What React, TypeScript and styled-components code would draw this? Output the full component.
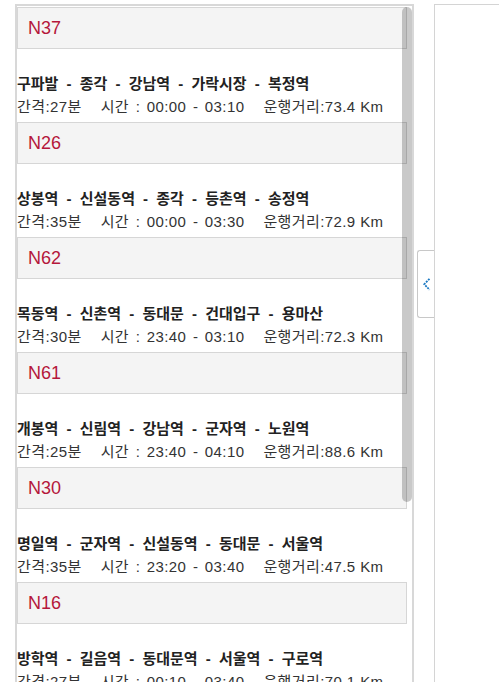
import React from "react";
import styled, { createGlobalStyle } from "styled-components";

const GlobalStyle = createGlobalStyle`
  html, body {
    margin: 0;
    padding: 0;
    overflow: hidden;
    background: #ffffff;
  }
  body {
    font-family: "Liberation Sans", "Noto Sans CJK KR", sans-serif;
  }
`;

const Page = styled.div`
  display: flex;
  align-items: flex-start;
  padding: 4px 0 0 15px;
  gap: 20px;
  height: 720px;
  box-sizing: border-box;
`;

const ListPanel = styled.div`
  position: relative;
  width: 399px;
  height: 716px;
  box-sizing: border-box;
  border: 2px solid #d8d8d8;
  overflow: hidden;
  flex-shrink: 0;
`;

const List = styled.div`
  display: flex;
  flex-direction: column;
`;

const Item = styled.div`
  display: flex;
  flex-direction: column;
`;

const Header = styled.div<{ $first?: boolean }>`
  height: 42px;
  box-sizing: border-box;
  margin: ${(p) => (p.$first ? "1px" : "0")} 5px 0 0;
  padding-left: 10px;
  display: flex;
  align-items: center;
  background: #f4f4f4;
  border: 1px solid #d6d6d6;
  font-family: "Liberation Sans", Arial, sans-serif;
  font-size: 18px;
  color: #b5173b;
`;

const Route = styled.div`
  margin-top: 26px;
  line-height: 18px;
  font-size: 15px;
  font-weight: bold;
  color: #222222;
  word-spacing: 4px;
  white-space: nowrap;
`;

const Info = styled.div`
  margin: 5px 0 6px;
  line-height: 18px;
  font-size: 15px;
  letter-spacing: 0.4px;
  color: #333333;
  white-space: nowrap;
  display: flex;
`;

const InfoPart = styled.span<{ $gap?: number; $spacing?: number }>`
  margin-left: ${(p) => p.$gap ?? 0}px;
  word-spacing: ${(p) => p.$spacing ?? 0}px;
`;

const Thumb = styled.div`
  position: absolute;
  left: 385px;
  top: 1px;
  width: 10px;
  height: 495px;
  border-radius: 5px;
  background: rgba(0, 0, 0, 0.21);
`;

const MapPanel = styled.div`
  position: relative;
  flex: 1;
  height: 716px;
  border-top: 1px solid #d4d4d4;
  border-left: 1px solid #d4d4d4;
`;

const ToggleTab = styled.button`
  position: absolute;
  left: -18px;
  top: 245px;
  width: 17px;
  height: 68px;
  padding: 0 0 0 1px;
  box-sizing: border-box;
  border: 1px solid #c8c8c8;
  border-right: none;
  border-radius: 3px 0 0 3px;
  background: #ffffff;
  display: flex;
  align-items: center;
  justify-content: center;
  cursor: pointer;
`;

type Line = {
  no: string;
  route: string[];
  interval: string;
  time: string;
  dist: string;
};

const lines: Line[] = [
  { no: "N37", route: ["구파발", "종각", "강남역", "가락시장", "복정역"], interval: "27", time: "00:00 - 03:10", dist: "73.4" },
  { no: "N26", route: ["상봉역", "신설동역", "종각", "등촌역", "송정역"], interval: "35", time: "00:00 - 03:30", dist: "72.9" },
  { no: "N62", route: ["목동역", "신촌역", "동대문", "건대입구", "용마산"], interval: "30", time: "23:40 - 03:10", dist: "72.3" },
  { no: "N61", route: ["개봉역", "신림역", "강남역", "군자역", "노원역"], interval: "25", time: "23:40 - 04:10", dist: "88.6" },
  { no: "N30", route: ["명일역", "군자역", "신설동역", "동대문", "서울역"], interval: "35", time: "23:20 - 03:40", dist: "47.5" },
  { no: "N16", route: ["방학역", "길음역", "동대문역", "서울역", "구로역"], interval: "27", time: "00:10 - 03:40", dist: "70.1" },
];

export default function App() {
  return (
    <>
      <GlobalStyle />
      <Page>
        <ListPanel>
          <List>
            {lines.map((l, i) => (
              <Item key={l.no}>
                <Header $first={i === 0}>{l.no}</Header>
                <Route>{l.route.join(" - ")}</Route>
                <Info>
                  <InfoPart>간격:{l.interval}분</InfoPart>
                  <InfoPart $gap={19} $spacing={2}>시간 : {l.time}</InfoPart>
                  <InfoPart $gap={19}>운행거리:{l.dist} Km</InfoPart>
                </Info>
              </Item>
            ))}
          </List>
          <Thumb />
        </ListPanel>
        <MapPanel>
          <ToggleTab aria-label="목록 접기">
            <svg width="8" height="13" viewBox="0 0 8 13">
              <polyline
                points="6.5,0.8 1.3,6.2 6.5,11.8"
                fill="none"
                stroke="#1a78c2"
                strokeWidth="1.8"
                strokeDasharray="2 1"
              />
            </svg>
          </ToggleTab>
        </MapPanel>
      </Page>
    </>
  );
}
